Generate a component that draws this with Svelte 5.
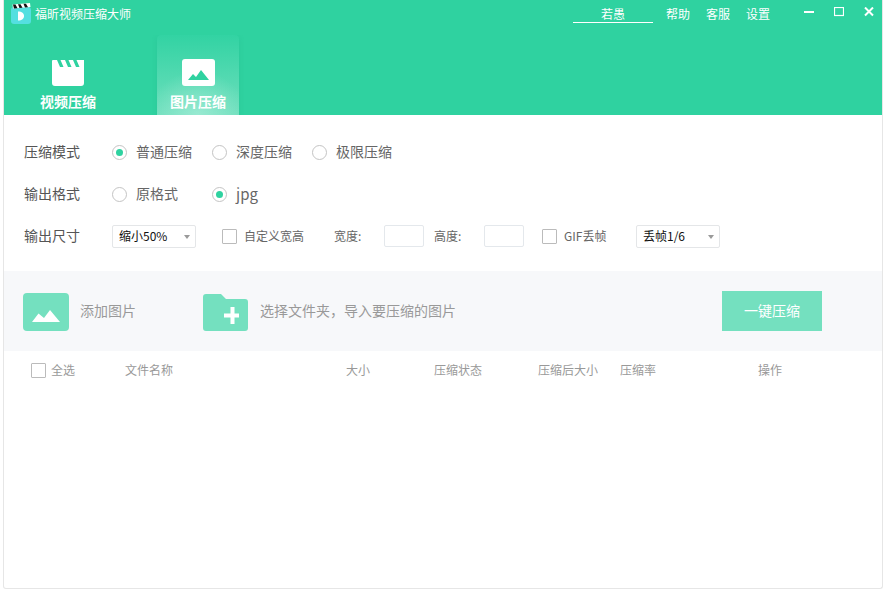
<script>
  const modes = [
    { label: '普通压缩', on: true },
    { label: '深度压缩', on: false },
    { label: '极限压缩', on: false }
  ];
  const formats = [
    { label: '原格式', on: false },
    { label: 'jpg', on: true }
  ];
</script>

<div class="window">
  <header class="head">
    <div class="titlebar">
      <svg class="logo" width="20" height="21" viewBox="0 0 20 21">
        <rect x="0" y="4" width="20" height="17" rx="3" fill="#54dfe0"/>
        <path d="M2 5.500 1.500 1.500 19 0l.5 4z" fill="#fff"/>
        <path d="M3 5.500 2 1.500h2.500l2 3.800zM8.500 5 7 1.200h2.500l2 3.500zM14 4.600 12.500.8H15l2 3.500z" fill="#111"/>
        <path d="M7 8.500c4 0 6 2 6 4.500s-2 4.500-6 4.500z" fill="#fff"/>
      </svg>
      <span class="apptitle">福昕视频压缩大师</span>
      <div class="spacer"></div>
      <span class="user">若愚</span>
      <nav class="links">
        <span>帮助</span><span>客服</span><span>设置</span>
      </nav>
      <div class="winbtns">
        <svg width="10" height="10" viewBox="0 0 10 10"><rect x="0" y="4" width="10" height="2" fill="#fff"/></svg>
        <svg width="10" height="10" viewBox="0 0 10 10"><rect x=".5" y=".5" width="9" height="8" fill="none" stroke="#fff" stroke-width="1.200"/></svg>
        <svg width="10" height="10" viewBox="0 0 10 10"><path d="M1 .5 9 8.500M9 .5 1 8.500" stroke="#fff" stroke-width="2"/></svg>
      </div>
    </div>
    <div class="tabs">
      <div class="tab">
        <svg width="32" height="26" viewBox="0 0 32 26">
          <path d="M0 1a1 1 0 0 1 1-1h4l3 7h3.500l-3-7H13l3 7h3.500l-3-7H21l3 7h3.500l-3-7H32v23a3 3 0 0 1-3 3H3a3 3 0 0 1-3-3z" fill="#fff"/>
        </svg>
        <span>视频压缩</span>
      </div>
      <div class="tab active">
        <svg width="33" height="27" viewBox="0 0 33 27">
          <rect width="33" height="27" rx="3" fill="#fff"/>
          <path d="M6 21l5-6 3 3 5-7 8 10z" fill="#2fd2a0"/>
        </svg>
        <span>图片压缩</span>
      </div>
    </div>
  </header>

  <section class="options">
    <div class="row">
      <span class="rowlabel">压缩模式</span>
      <div class="choices modes">
        {#each modes as m}
          <span class="radio-item"><i class="radio" class:on={m.on}></i><span class="t">{m.label}</span></span>
        {/each}
      </div>
    </div>
    <div class="row">
      <span class="rowlabel">输出格式</span>
      <div class="choices">
        {#each formats as f}
          <span class="radio-item" class:jpg={f.label === 'jpg'}><i class="radio" class:on={f.on}></i><span class="t">{f.label}</span></span>
        {/each}
      </div>
    </div>
    <div class="row small">
      <span class="rowlabel">输出尺寸</span>
      <div class="select first">缩小50%<b></b></div>
      <span class="check c1"><i class="box"></i><span class="t">自定义宽高</span></span>
      <span class="dim d1">宽度:</span><span class="field"></span>
      <span class="dim d2">高度:</span><span class="field"></span>
      <span class="check c2"><i class="box"></i><span class="t">GIF丢帧</span></span>
      <div class="select second">丢帧1/6<b></b></div>
    </div>
  </section>

  <section class="band">
    <div class="add a1">
      <svg width="46" height="38" viewBox="0 0 46 38">
        <rect width="46" height="38" rx="4" fill="#74e0bf"/>
        <path d="M9 29l6.500-8.500L21 25l6-8 10 12z" fill="#fff"/>
      </svg>
      <span class="t">添加图片</span>
    </div>
    <div class="add a2">
      <svg width="45" height="37" viewBox="0 0 45 37">
        <path d="M3 0h15l5 5h19a3 3 0 0 1 3 3v26a3 3 0 0 1-3 3H3a3 3 0 0 1-3-3V3a3 3 0 0 1 3-3z" fill="#74e0bf"/>
        <path d="M27.500 13v6.500H21v4h6.500V30h4v-6.500H36v-4h-4.500V13z" fill="#fff"/>
      </svg>
      <span class="t">选择文件夹，导入要压缩的图片</span>
    </div>
    <button class="go">一键压缩</button>
  </section>

  <div class="thead">
    <span class="all"><i class="box"></i><span class="t">全选</span></span>
    <span class="t">文件名称</span>
    <span class="t">大小</span>
    <span class="t">压缩状态</span>
    <span class="t">压缩后大小</span>
    <span class="t">压缩率</span>
    <span class="t">操作</span>
  </div>
</div>

<style>
  :global(body) { margin: 0; background: #fff; }
  * { box-sizing: border-box; }
  .window {
    width: 880px; height: 589px; margin-left: 3px;
    border: 1px solid #e6e6e6; border-top: 0; border-radius: 0 0 3px 3px;
    font-family: "Noto Sans CJK SC", "Open Sans", sans-serif;
    background: #fff; overflow: hidden;
  }
  i { display: block; font-style: normal; }
  .t { padding-bottom: 2px; }
  .head { margin: 0 -1px; height: 115px; background: #2fd2a0; color: #fff; display: flex; flex-direction: column; }
  .titlebar { height: 35px; display: flex; align-items: flex-start; padding: 3px 9px 0 8px; }
  .logo { flex: none; }
  .apptitle { margin-left: 4px; font-size: 12px; line-height: 16px; margin-top: 3px; }
  .spacer { flex: 1; }
  .user { width: 80px; height: 20px; line-height: 16px; padding-top: 3px; font-size: 12px; text-align: center; border-bottom: 1px solid #fff; }
  .links { display: flex; gap: 16px; margin-left: 13px; font-size: 12px; line-height: 16px; padding-top: 3px; }
  .winbtns { display: flex; gap: 20px; margin-left: 34px; padding-top: 4px; }
  .tabs { flex: 1; display: flex; padding-left: 15px; gap: 39px; }
  .tab { width: 100px; display: flex; flex-direction: column; align-items: center; justify-content: flex-end; font-size: 14px; font-weight: 700; line-height: 18px; padding-bottom: 5px; }
  .tab svg { margin-bottom: 6px; }
  .tab.active {
    width: 82px; border-radius: 4px 4px 0 0;
    background:
      radial-gradient(ellipse 60% 55% at 50% 100%, rgba(170,238,218,.7) 0%, rgba(170,238,218,0) 100%),
      linear-gradient(180deg, #32d3a3 0%, #6fdfbd 100%);
    box-shadow: 0 2px 5px rgba(30,170,130,.25);
    clip-path: inset(0 -6px 0 -6px);
  }
  .options { height: 156px; padding: 16px 0 0 20px; color: #555; }
  .row { height: 42px; display: flex; align-items: center; font-size: 14px; }
  .rowlabel { width: 88px; flex: none; padding-bottom: 2px; }
  .choices { display: flex; }
  .radio-item { display: flex; align-items: center; width: 100px; gap: 9px; color: #666; }
  .jpg { font-size: 15px; }
  .radio { width: 15px; height: 15px; border-radius: 50%; border: 1px solid #c4c4c4; background: #fff; position: relative; flex: none; }
  .radio.on::after { content: ""; position: absolute; inset: 3px; border-radius: 50%; background: #2fd2a0; }
  .small { font-size: 12px; color: #666; }
  .small .rowlabel { font-size: 14px; color: #555; }
  .select { width: 84px; height: 23px; border: 1px solid #e4e6e8; border-radius: 2px; color: #111; padding-left: 6px; line-height: 20px; position: relative; flex: none; }
  .select b { position: absolute; right: 5px; top: 9px; border: 3.500px solid transparent; border-top: 4px solid #9a9a9a; border-bottom: 0; }
  .check { display: flex; align-items: center; gap: 7px; flex: none; }
  .box { width: 15px; height: 15px; border: 1px solid #bbb; border-radius: 1px; background: #fff; flex: none; }
  .c1 { margin-left: 26px; width: 112px; }
  .dim { width: 50px; flex: none; padding-bottom: 2px; }
  .field { width: 40px; height: 22px; border: 1px solid #e4e8ec; border-radius: 2px; flex: none; }
  .d2 { margin-left: 10px; }
  .c2 { margin-left: 18px; width: 94px; }
  .band { height: 80px; background: #f7f8fa; display: flex; align-items: center; padding-left: 19px; font-size: 14px; color: #999; }
  .add { display: flex; align-items: center; gap: 11px; }
  .add svg { flex: none; margin-top: 2px; }
  .a1 { width: 180px; }
  .a2 { gap: 12px; width: 519px; }
  .go { width: 100px; height: 40px; border: 0; background: #74e0bf; color: #fff; font: inherit; font-size: 14px; padding: 0 0 2px; }
  .thead {
    height: 38px; display: grid; align-items: center;
    grid-template-columns: 94px 221px 88px 104px 82px 138px 1fr;
    padding-left: 27px; font-size: 12px; color: #999;
  }
  .all { display: flex; align-items: center; gap: 5px; }
</style>
